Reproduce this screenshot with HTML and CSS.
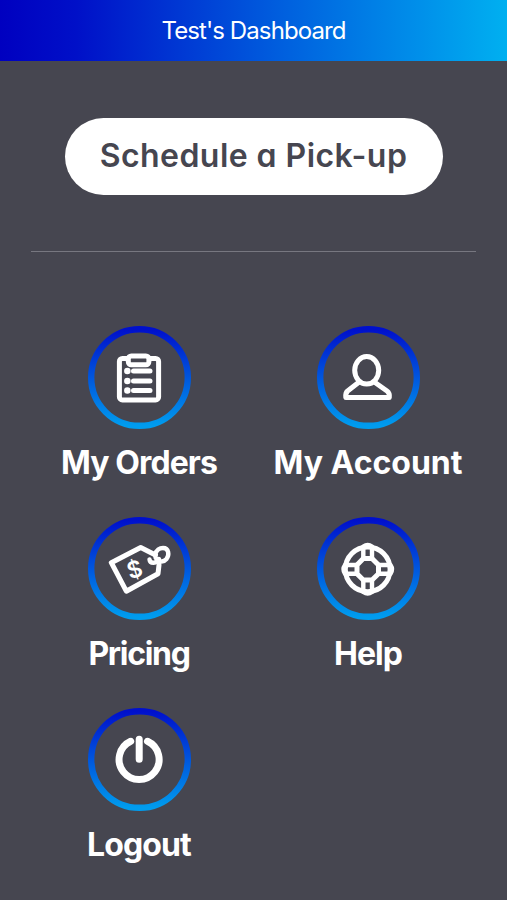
FILE: index.html
```
<!DOCTYPE html>
<html lang="en">
<head>
<meta charset="UTF-8">
<meta name="viewport" content="width=device-width, initial-scale=1.0">
<title>Test's Dashboard</title>
<link rel="stylesheet" href="styles.css">
</head>
<body>

<header class="top-bar">
  <h1>Test's Dashboard</h1>
</header>

<main>
  <button class="pickup-btn"><span>Schedule a Pick-up</span></button>

  <hr class="divider">

  <nav class="menu">
    <a class="menu-item" href="#">
      <svg class="icon" viewBox="0 0 103 103">
        <defs>
          <linearGradient id="ring" x1="0" y1="0" x2="0" y2="1">
            <stop offset="0" stop-color="#0010cc"/>
            <stop offset="1" stop-color="#009cee"/>
          </linearGradient>
        </defs>
        <circle class="ring" cx="51.5" cy="51.5" r="48.3"/>
        <rect x="31.4" y="32.5" width="39.2" height="41.4" rx="3"/>
        <rect class="cover" x="40.3" y="30" width="20.6" height="8.8" rx="3"/>
        <path d="M45.5 45H62M45.5 55H62M45.5 64.5H62"/>
        <path class="dots" d="M39.3 45h.1M39.3 55h.1M39.3 64.5h.1"/>
      </svg>
      <span class="label medium">My Orders</span>
    </a>
    <a class="menu-item" href="#">
      <svg class="icon" viewBox="0 0 103 103">
        <circle class="ring" cx="51.5" cy="51.5" r="48.3"/>
        <ellipse cx="49.7" cy="44.3" rx="12" ry="13.8"/>
        <path d="M41.5 56.5L30.6 65Q28.3 67 28.8 71.5H72.3Q72.8 67 70 65L58 56.5"/>
      </svg>
      <span class="label">My Account</span>
    </a>
    <a class="menu-item" href="#">
      <svg class="icon" viewBox="0 0 103 103">
        <circle class="ring" cx="51.5" cy="51.5" r="48.3"/>
        <path d="M67.5 38L52.7 30.5L23.3 45.7L38.3 74.2L70 56.7L71 48"/>
        <path class="thin" d="M61.5 42.5C62 47 69 47 71 42M67 38C68 33 72 31 75 31C81 31 81.5 38 78.5 42C75 46 70 45 67.5 40.5"/>
        <text x="46.5" y="60.5" transform="rotate(-18 46.5 52)">$</text>
      </svg>
      <span class="label narrow">Pricing</span>
    </a>
    <a class="menu-item" href="#">
      <svg class="icon" viewBox="0 0 103 103">
        <circle class="ring" cx="51.5" cy="51.5" r="48.3"/>
        <circle cx="50.7" cy="52.3" r="22.4"/>
        <path d="M46.3 41.5H55L61.5 48V56.7L55 63H46.3L40 56.7V48Z"/>
        <path class="thin" d="M46.3 41V29.5Q50.7 26.5 55 29.5V41M46.3 63.5V75Q50.7 78 55 75V63.5M39.5 48H28Q25 52.3 28 56.7H39.5M62 48H73.5Q76.5 52.3 73.5 56.7H62"/>
      </svg>
      <span class="label medium">Help</span>
    </a>
    <a class="menu-item" href="#">
      <svg class="icon" viewBox="0 0 103 103">
        <circle class="ring" cx="51.5" cy="51.5" r="48.3"/>
        <path class="thick" d="M42.7 33.3A20 20 0 1 0 59.5 33.3M51.2 31.3V51.3"/>
      </svg>
      <span class="label medium">Logout</span>
    </a>
  </nav>
</main>

</body>
</html>
```
FILE: styles.css
```
* {
  box-sizing: border-box;
}
body {
  margin: 0;
  min-height: 100vh;
  background: #464650;
  font-family: Inter, sans-serif;
  color: #fff;
}
.top-bar {
  height: 61px;
  display: flex;
  align-items: center;
  justify-content: center;
  background: linear-gradient(to right, #0000c0, #0010c8 15%, #005ede 55%, #0090ea 83%, #00b0f0);
}
h1 {
  margin: 0;
  font-size: 24px;
  font-weight: 400;
  letter-spacing: -0.9px;
}
main {
  display: flex;
  flex-direction: column;
  align-items: center;
  padding-top: 57px;
}
.pickup-btn {
  width: 378px;
  height: 77px;
  padding: 0 0 3px;
  border: none;
  border-radius: 39px;
  background: #fff;
  color: #464650;
  font: 600 32px Inter, sans-serif;
  font-feature-settings: "cv11";
  letter-spacing: 0.45px;
  white-space: nowrap;
  cursor: pointer;
}
.divider {
  width: 445px;
  height: 1px;
  margin: 56px 0 74px;
  border: none;
  background: #777780;
}
.menu {
  display: grid;
  grid-template-columns: 229px 229px;
  grid-auto-rows: 191px;
}
.menu-item {
  display: flex;
  flex-direction: column;
  align-items: center;
  color: #fff;
  text-decoration: none;
}
.icon {
  width: 103px;
  height: 103px;
  fill: none;
  stroke: #fff;
  stroke-width: 5;
  stroke-linecap: round;
  stroke-linejoin: round;
}
.icon .ring {
  stroke: url(#ring);
  stroke-width: 6.4;
}
.icon .cover {
  fill: #464650;
}
.icon .dots {
  stroke-width: 6.4;
}
.icon .thin {
  stroke-width: 4.4;
}
.icon .thick {
  stroke-width: 7;
}
.icon text {
  fill: #fff;
  stroke: none;
  font-size: 23px;
  font-weight: 600;
  text-anchor: middle;
}
.label {
  margin-top: 14px;
  font-size: 32px;
  font-weight: 700;
  line-height: 40px;
  font-feature-settings: "cv11";
  white-space: nowrap;
}
.label.medium {
  letter-spacing: -0.9px;
}
.label.narrow {
  letter-spacing: -1.3px;
}
```
